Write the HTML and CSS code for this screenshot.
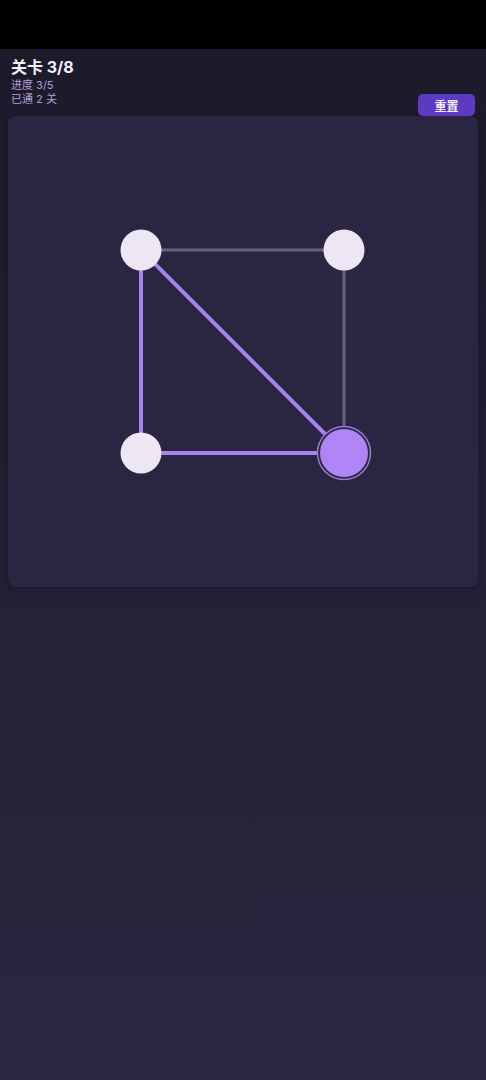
FILE: index.html
```html
<!DOCTYPE html>
<html lang="zh">
<head>
  <meta charset="UTF-8">
  <title>关卡 3/8</title>
  <link rel="stylesheet" href="styles.css">
</head>
<body>

  <!-- Status bar -->
  <div class="status-bar"></div>

  <div class="page">
    <!-- Level header -->
    <div class="level-header">
      <div class="level-info">
        <h1 class="level-title">关卡 3/8</h1>
        <div class="level-meta">进度 3/5</div>
        <div class="level-meta">已通 2 关</div>
      </div>
      <button class="reset-btn">重置</button>
    </div>

    <!-- Board -->
    <div class="board">
      <svg class="board-svg" viewBox="0 0 470 471" width="470" height="471">
        <!-- Edges not yet drawn -->
        <line class="edge" x1="133" y1="134" x2="336" y2="134" />
        <line class="edge" x1="336" y1="134" x2="336" y2="337" />
        <!-- Drawn path -->
        <line class="edge done" x1="133" y1="134" x2="133" y2="337" />
        <line class="edge done" x1="133" y1="337" x2="336" y2="337" />
        <line class="edge done" x1="133" y1="134" x2="336" y2="337" />
        <!-- Nodes -->
        <circle class="node" cx="133" cy="134" r="20.5" />
        <circle class="node" cx="336" cy="134" r="20.5" />
        <circle class="node" cx="133" cy="337" r="20.5" />
        <circle class="node-ring" cx="336" cy="337" r="26.5" />
        <circle class="node current" cx="336" cy="337" r="24" />
      </svg>
    </div>
  </div>

</body>
</html>
```

FILE: styles.css
```css
/* Global Styles */
body {
  font-family: 'Inter', 'Noto Sans CJK SC', sans-serif;
  background: linear-gradient(to bottom, #1c1a29 0%, #242036 50%, #2c2640 100%);
  margin: 0;
  padding: 0;
  min-height: 100vh;
  color: #ffffff;
}

.status-bar {
  height: 49px;
  background-color: #000000;
}

.page {
  padding: 0 8px;
}

/* Level Header */
.level-header {
  display: flex;
  justify-content: space-between;
  align-items: flex-end;
  padding: 7px 3px 0 3px;
}

.level-info {
  margin-bottom: 10px;
}

.level-title {
  margin: 0;
  font-size: 16px;
  font-weight: 700;
  line-height: 22px;
  color: #f4f0fb;
}

.level-meta {
  font-size: 11px;
  line-height: 14px;
  color: #ae9ed6;
}

.reset-btn {
  width: 57px;
  height: 22px;
  padding: 0;
  background-color: #5e3ac2;
  color: #f2eefc;
  border: none;
  border-radius: 5px;
  font-family: 'Noto Sans CJK SC', sans-serif;
  font-size: 12px;
  font-weight: 700;
  cursor: pointer;
}

/* Board */
.board {
  width: 470px;
  height: 471px;
  background-color: #2a2541;
  border-radius: 8px;
  box-shadow: 0 2px 8px rgba(10, 8, 20, 0.35);
}

.board-svg {
  display: block;
}

.edge {
  stroke: #6a607f;
  stroke-width: 3;
}

.edge.done {
  stroke: #aa80f2;
  stroke-width: 4;
}

.node {
  fill: #ece6f5;
}

.node.current {
  fill: #ae84f6;
}

.node-ring {
  fill: #2a2541;
  stroke: #9a78d4;
  stroke-width: 1.5;
}
```
